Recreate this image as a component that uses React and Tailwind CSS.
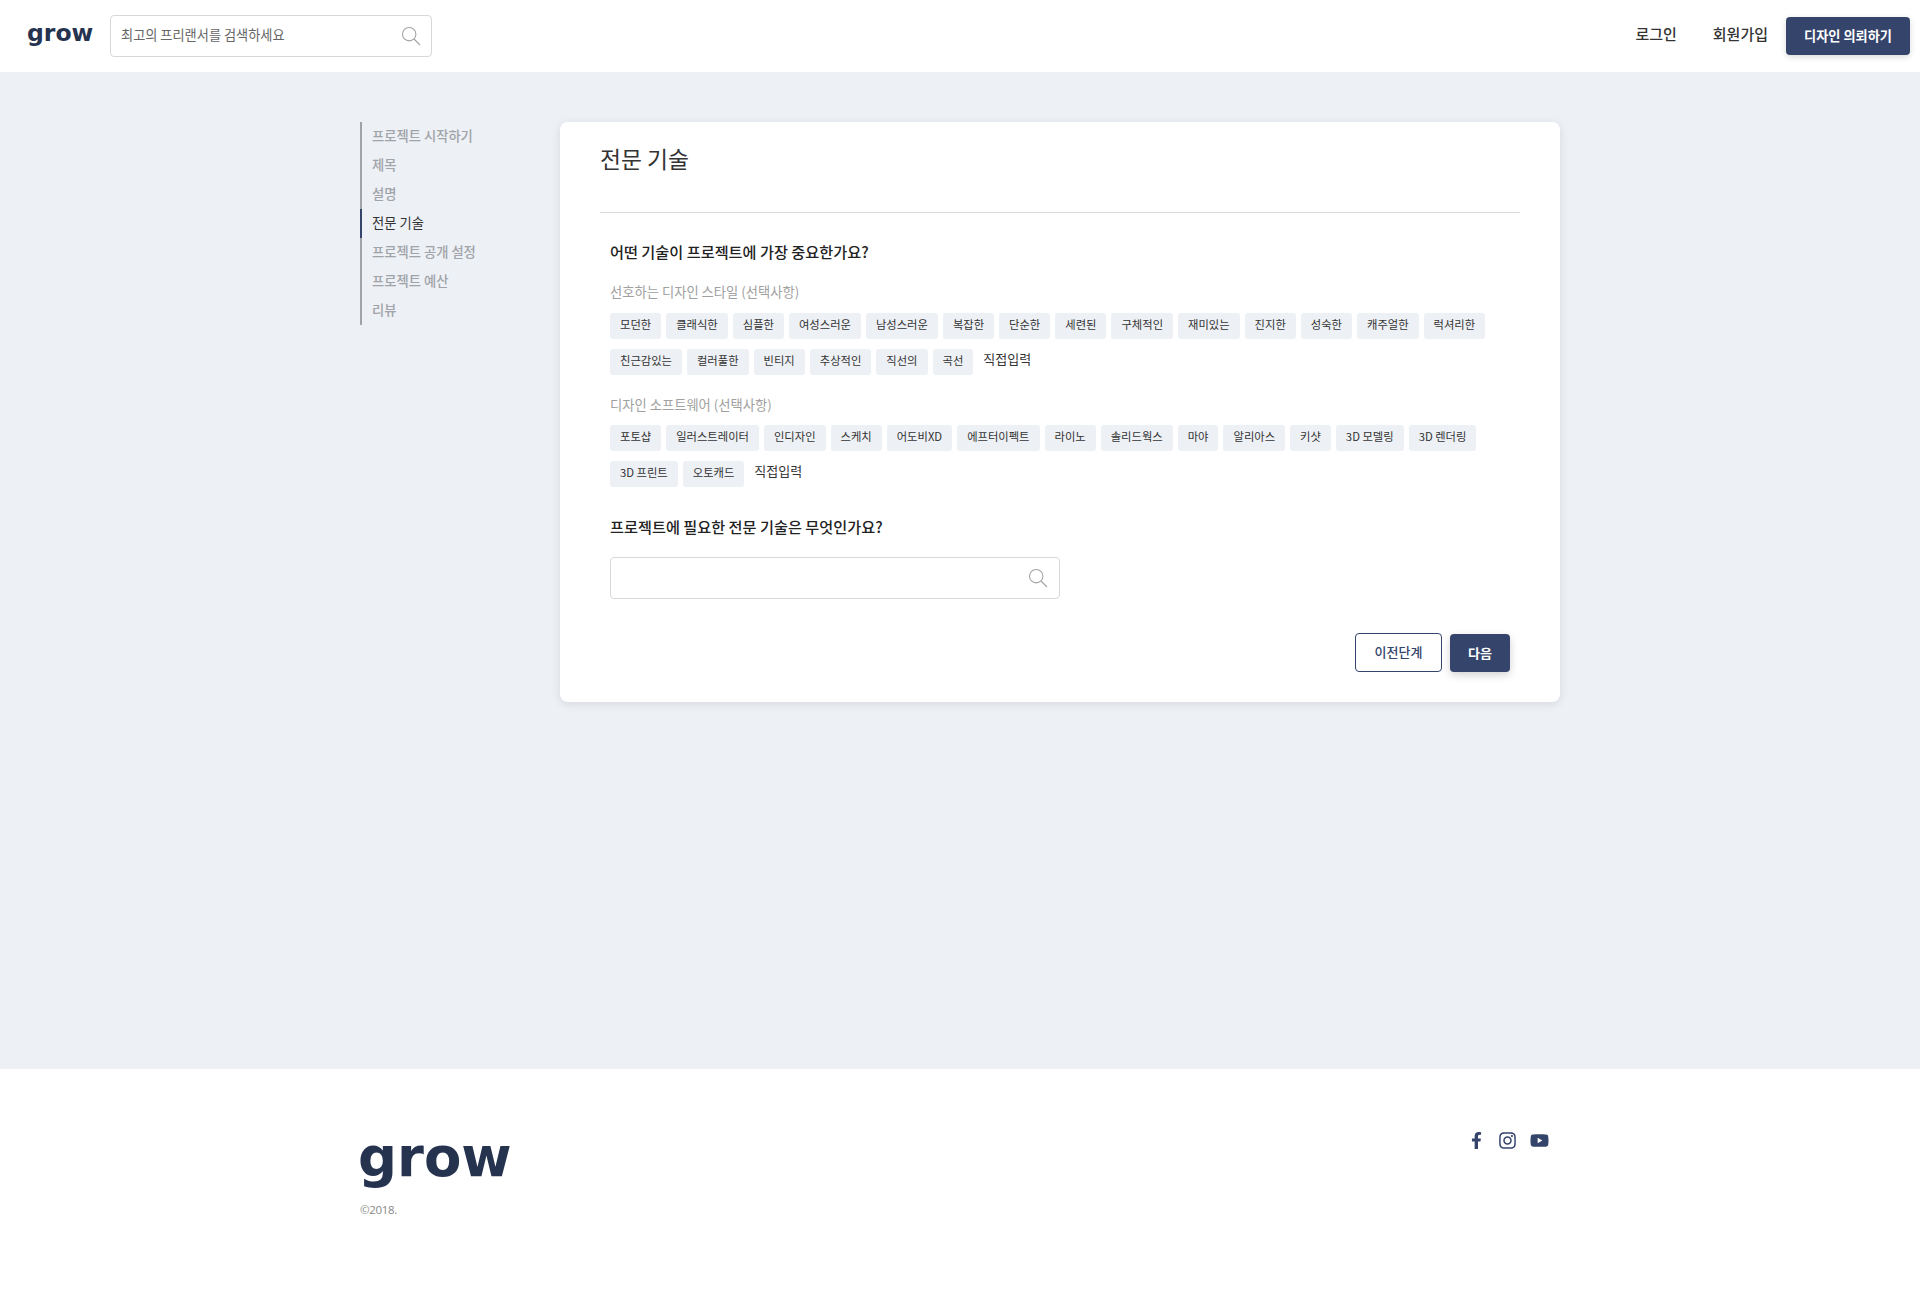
import React from "react";
import { FaFacebookF, FaInstagram, FaYoutube } from "react-icons/fa";

const styles = ["모던한","클래식한","심플한","여성스러운","남성스러운","복잡한","단순한","세련된","구체적인","재미있는","진지한","성숙한","캐주얼한","럭셔리한","친근감있는","컬러풀한","빈티지","추상적인","직선의","곡선"];
const softwares = ["포토샵","일러스트레이터","인디자인","스케치","어도비XD","에프터이펙트","라이노","솔리드웍스","마야","알리아스","키샷","3D 모델링","3D 렌더링","3D 프린트","오토캐드"];
const steps = ["프로젝트 시작하기","제목","설명","전문 기술","프로젝트 공개 설정","프로젝트 예산","리뷰"];

function SearchIcon() {
  return (
    <svg width="20" height="20" viewBox="0 0 20 20" fill="none" stroke="#a3a3a3" strokeWidth="1.1">
      <circle cx="8.2" cy="8.2" r="6.7" />
      <path d="M13 13l6 6" />
    </svg>
  );
}

function TagGroup({ items }) {
  return (
    <div className="flex flex-wrap items-start">
      {items.map((t) => (
        <span key={t} className="mr-[5px] mb-[10px] h-[26px] rounded-[3px] bg-[#edf0f5] px-[10px] text-[11.3px] leading-[23px] text-[#333]">{t}</span>
      ))}
      <span className="ml-[5px] mb-[10px] h-[26px] text-[13px] leading-[20px] text-[#333]">직접입력</span>
    </div>
  );
}

export default function App() {
  return (
    <div className="flex min-h-[1303px] flex-col bg-[#edf0f5] font-['Noto_Sans_CJK_KR','Noto_Sans',sans-serif]">
      <header className="flex h-[72px] items-center bg-white pl-[27px] pr-[10px]">
        <span className="w-[83px] pb-[4px] font-['DejaVu_Sans',sans-serif] text-[23.5px] font-bold leading-none text-[#26334f]">grow</span>
        <div className="flex h-[42px] w-[322px] items-center justify-between rounded-[4px] border border-[#d8d8d8] pl-[10px] pr-[10px]">
          <span className="pb-[2px] text-[13.2px] text-[#666]">최고의 프리랜서를 검색하세요</span>
          <SearchIcon />
        </div>
        <div className="ml-auto flex items-center">
          <span className="mr-[36px] pb-[4px] text-[15px] font-medium text-[#333]">로그인</span>
          <span className="mr-[18px] pb-[4px] text-[15px] font-medium text-[#333]">회원가입</span>
          <button className="h-[38px] w-[124px] rounded-[4px] bg-[#34446a] pb-[1px] text-[13.2px] font-bold text-white shadow-[0_2px_6px_rgba(0,0,0,0.15)]">디자인 의뢰하기</button>
        </div>
      </header>

      <main className="flex flex-1 justify-center pt-[50px]">
        <div className="flex h-[580px] w-[1200px] items-start">
          <nav className="w-[200px] border-l-[2px] border-[#a0a3a8]">
            {steps.map((s) => {
              const on = s === "전문 기술";
              return (
                <div key={s} className={on ? "-ml-[2px] h-[29px] border-l-[2px] border-[#34446a] pl-[10px] text-[13.3px] leading-[27px] text-[#333]" : "h-[29px] pl-[10px] text-[13.3px] font-medium leading-[27px] text-[#a0a3a8]"}>{s}</div>
              );
            })}
          </nav>

          <section className="h-[580px] w-[1000px] rounded-[8px] bg-white px-[40px] shadow-[0_2px_10px_rgba(0,0,0,0.1)]">
            <h1 className="h-[91px] border-b border-[#dcdcdc] pt-[20px] text-[22.8px] font-normal leading-[34px] text-[#333]">전문 기술</h1>
            <div className="px-[10px]">
              <h2 className="mt-[27px] text-[15.2px] font-medium leading-[23px] text-[#222]">어떤 기술이 프로젝트에 가장 중요한가요?</h2>
              <p className="mb-[11px] mt-[18px] text-[13.3px] leading-[21px] text-[#a0a0a0]">선호하는 디자인 스타일 (선택사항)</p>
              <TagGroup items={styles} />
              <p className="mb-[10px] mt-[9px] text-[13.3px] leading-[21px] text-[#a0a0a0]">디자인 소프트웨어 (선택사항)</p>
              <TagGroup items={softwares} />
              <h2 className="mt-[18px] text-[15.2px] font-medium leading-[23px] text-[#222]">프로젝트에 필요한 전문 기술은 무엇인가요?</h2>
              <div className="mt-[19px] flex h-[42px] w-[450px] items-center justify-end rounded-[4px] border border-[#d8d8d8] pr-[11px]">
                <SearchIcon />
              </div>
              <div className="mt-[34px] flex items-start justify-end">
                <button className="mr-[8px] h-[39px] w-[87px] rounded-[4px] border border-[#34446a] bg-white pb-[2px] text-[13px] font-medium text-[#34446a]">이전단계</button>
                <button className="mt-px h-[38px] w-[60px] rounded-[4px] bg-[#34446a] text-[13px] font-bold text-white shadow-[0_3px_8px_rgba(0,0,0,0.18)]">다음</button>
              </div>
            </div>
          </section>
        </div>
      </main>

      <footer className="flex h-[234px] justify-center bg-white">
        <div className="flex w-[1200px] items-start justify-between pt-[53px]">
          <div>
            <div className="-ml-[2px] mt-[5px] font-['DejaVu_Sans',sans-serif] text-[54.5px] font-bold leading-[60px] text-[#26334f]">grow</div>
            <div className="mt-[14px] font-['Open_Sans',sans-serif] text-[11.5px] leading-[18px] tracking-[-0.3px] text-[#888]">©2018.</div>
          </div>
          <div className="mr-[11px] mt-[9px] flex items-center text-[#34446a]">
            <FaFacebookF className="mr-[13px] ml-[2px] h-[17px] w-[17px]" />
            <FaInstagram className="mr-[13px] h-[19px] w-[19px]" />
            <FaYoutube className="h-[19px] w-[19px]" />
          </div>
        </div>
      </footer>
    </div>
  );
}
